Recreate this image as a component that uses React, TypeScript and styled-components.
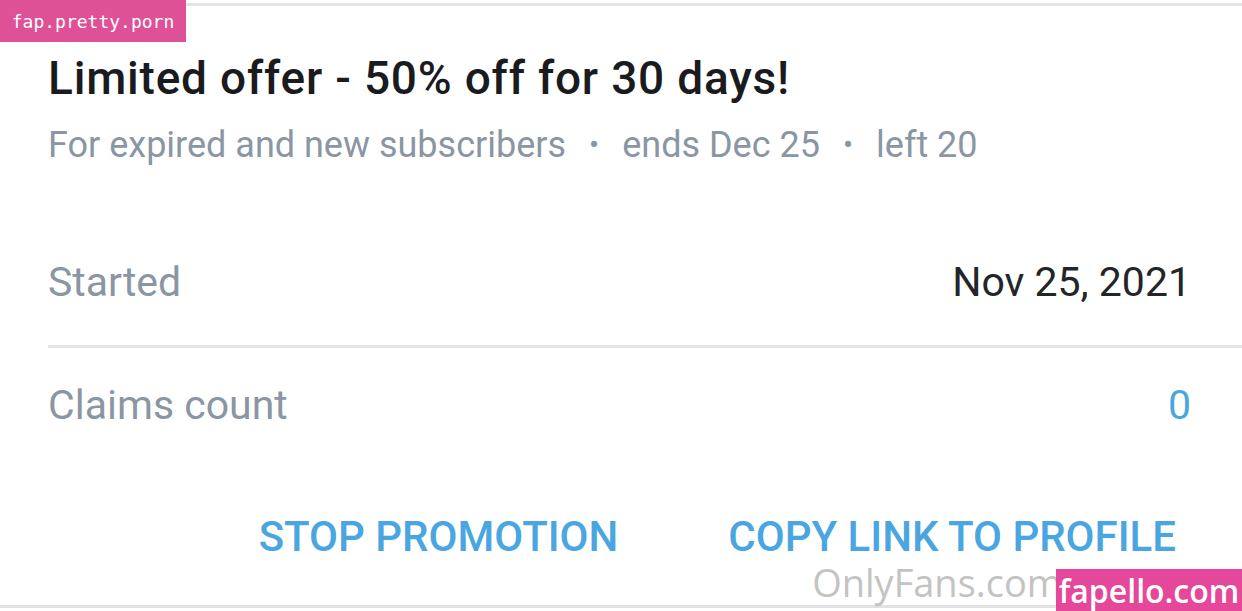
import React from "react";
import styled, { createGlobalStyle } from "styled-components";

const Global = createGlobalStyle`
  html, body { margin: 0; padding: 0; background: #fff; }
  body { font-family: Roboto, "Liberation Sans", Arial, sans-serif; }
`;

const Page = styled.div`
  position: relative;
  width: 1242px;
  height: 611px;
  box-sizing: border-box;
  padding-top: 3px;
  overflow: hidden;
  background: #fff;
`;

const Card = styled.div`
  height: 605px;
  box-sizing: border-box;
  border-top: 3px solid #e3e4e6;
  border-bottom: 3px solid #e0e2e4;
  display: flex;
  flex-direction: column;
  padding-left: 48px;
`;

const Title = styled.h1`
  margin: 0;
  margin-top: 44px;
  font-size: 46px;
  line-height: 56px;
  font-weight: 500;
  color: #1a1b1e;
  letter-spacing: 0.8px;
`;

const Meta = styled.div`
  display: flex;
  align-items: center;
  margin-top: 16px;
  font-size: 36px;
  line-height: 46px;
  color: #8a96a3;
`;

const Dot = styled.span`
  margin: 0 23px;
  font-size: 30px;
`;

const Rows = styled.div`
  margin-top: 51px;
  display: flex;
  flex-direction: column;
`;

const Row = styled.div<{ $divider?: boolean }>`
  display: flex;
  justify-content: space-between;
  align-items: center;
  height: ${(p) => (p.$divider ? "129px" : "114px")};
  padding-right: 51px;
  box-sizing: border-box;
  border-bottom: ${(p) => (p.$divider ? "3px solid #e3e4e6" : "none")};
`;

const Label = styled.span`
  font-size: 41px;
  color: #8a96a3;
`;

const Value = styled.span<{ $accent?: boolean }>`
  font-size: 41px;
  color: ${(p) => (p.$accent ? "#4aa6e0" : "#242529")};
`;

const Actions = styled.div`
  display: flex;
  justify-content: flex-end;
  gap: 110px;
  padding-right: 66px;
  margin-top: 50px;
`;

const ActionButton = styled.button`
  border: none;
  background: none;
  padding: 0;
  font-family: Roboto, "Liberation Sans", Arial, sans-serif;
  font-size: 42px;
  font-weight: 500;
  color: #4aa6e0;
  letter-spacing: 0;
  text-transform: uppercase;
  cursor: pointer;
`;

const TopBadge = styled.div`
  position: absolute;
  left: 0;
  top: 0;
  width: 186px;
  height: 42px;
  background: #de5196;
  color: #fff;
  font-family: "DejaVu Sans Mono", "Liberation Mono", monospace;
  font-size: 18px;
  display: flex;
  align-items: center;
  justify-content: center;
`;

const Watermark = styled.div`
  position: absolute;
  right: 180px;
  bottom: 3px;
  font-family: "Open Sans", sans-serif;
  font-size: 38px;
  color: #c3c3c3;
`;

const BottomBadge = styled.div`
  position: absolute;
  right: 0;
  bottom: 0;
  width: 186px;
  height: 42px;
  background: #e5479a;
  color: #fff;
  font-family: "Open Sans", sans-serif;
  font-weight: 600;
  font-size: 32px;
  display: flex;
  align-items: center;
  justify-content: center;
`;

export default function App() {
  return (
    <>
      <Global />
      <Page>
        <Card>
          <Title>Limited offer - 50% off for 30 days!</Title>
          <Meta>
            <span>For expired and new subscribers</span>
            <Dot>•</Dot>
            <span>ends Dec 25</span>
            <Dot>•</Dot>
            <span>left 20</span>
          </Meta>
          <Rows>
            <Row $divider>
              <Label>Started</Label>
              <Value>Nov 25, 2021</Value>
            </Row>
            <Row>
              <Label>Claims count</Label>
              <Value $accent>0</Value>
            </Row>
          </Rows>
          <Actions>
            <ActionButton>Stop promotion</ActionButton>
            <ActionButton>Copy link to profile</ActionButton>
          </Actions>
        </Card>
        <TopBadge>fap.pretty.porn</TopBadge>
        <Watermark>OnlyFans.com</Watermark>
        <BottomBadge>fapello.com</BottomBadge>
      </Page>
    </>
  );
}
